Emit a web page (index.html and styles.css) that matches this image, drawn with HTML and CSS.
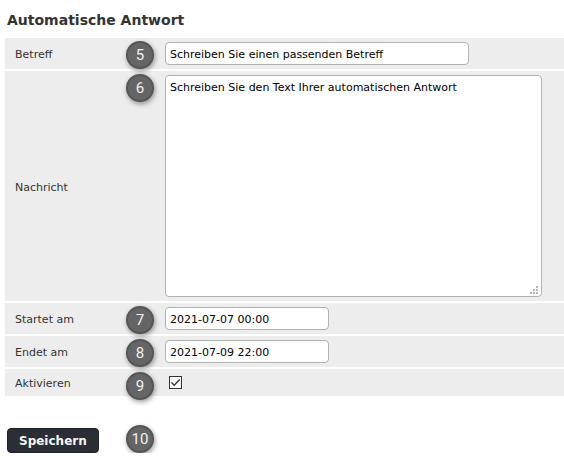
FILE: index.html
```html
<!DOCTYPE html>
<html lang="de">

<head>
    <meta charset="UTF-8" />
    <meta name="viewport" content="width=device-width, initial-scale=1.0" />
    <title>Automatische Antwort</title>
    <link rel="stylesheet" href="styles.css">
</head>

<body>

    <form>
        <h2>Automatische Antwort</h2>

        <div class="rows">
            <div class="row">
                <label for="subject">Betreff</label>
                <span class="step">5</span>
                <input type="text" id="subject" class="field wide" value="Schreiben Sie einen passenden Betreff" />
            </div>

            <div class="row">
                <label for="message">Nachricht</label>
                <span class="step">6</span>
                <div class="message">
                    <textarea id="message" class="field">Schreiben Sie den Text Ihrer automatischen Antwort</textarea>
                    <svg class="grip" width="8" height="8" viewBox="0 0 8 8" fill="#b5b5b5" shape-rendering="crispEdges" aria-hidden="true">
                        <path d="M6 0h2v2H6zM3 3h2v2H3zM6 3h2v2H6zM0 6h2v2H0zM3 6h2v2H3zM6 6h2v2H6z" />
                    </svg>
                </div>
            </div>

            <div class="row">
                <label for="start">Startet am</label>
                <span class="step">7</span>
                <input type="text" id="start" class="field date" value="2021-07-07 00:00" />
            </div>

            <div class="row">
                <label for="end">Endet am</label>
                <span class="step">8</span>
                <input type="text" id="end" class="field date" value="2021-07-09 22:00" />
            </div>

            <div class="row check-row">
                <label for="active">Aktivieren</label>
                <span class="step">9</span>
                <span class="check">
                    <input type="checkbox" id="active" checked />
                    <svg width="13" height="13" viewBox="0 0 13 13" fill="none" stroke="#333" stroke-width="1.4" aria-hidden="true">
                        <path d="M2.5 6.5l2.7 2.8 5.5-5.8" />
                    </svg>
                </span>
            </div>
        </div>

        <div class="actions">
            <button type="button">Speichern</button>
            <span class="step">10</span>
        </div>
    </form>

</body>

</html>
```

FILE: styles.css
```css
* {
    box-sizing: border-box;
}

body {
    margin: 0;
    background-color: white;
    color: #333;
    font-family: Verdana, "DejaVu Sans", sans-serif;
    font-size: 11px;
}

form {
    padding: 10px 0 0 5px;
}

h2 {
    margin: 0;
    padding: 0 2px 8px;
    font-size: 14px;
    line-height: 20px;
}

.rows {
    display: flex;
    flex-direction: column;
    gap: 2px;
}

.row {
    position: relative;
    display: grid;
    grid-template-columns: 150px 1fr;
    align-items: center;
    padding: 4px 22px 4px 10px;
    background-color: #ededed;
}

.row label {
    padding-top: 2px;
}

.field {
    display: block;
    width: 100%;
    height: 23px;
    margin: 0;
    padding: 2px 4px 0;
    border: 1px solid #b2b2b2;
    border-radius: 4px;
    background-color: white;
    color: black;
    font-family: inherit;
    font-size: 11px;
    line-height: 15px;
}

.wide {
    max-width: 304px;
}

.date {
    max-width: 164px;
}

.message {
    position: relative;
}

.message .field {
    height: 222px;
    padding: 4px;
    resize: none;
}

/* resize handle in the corner of the text box */
.grip {
    position: absolute;
    right: 4px;
    bottom: 3px;
}

.row:not(.check-row) {
    min-height: 31px;
}

.check-row {
    min-height: 27px;
}

.check {
    position: relative;
    width: 13px;
    height: 13px;
    margin-left: 4px;
}

.check input {
    display: block;
    appearance: none;
    width: 13px;
    height: 13px;
    margin: 0;
    border: 1px solid #333;
    background-color: white;
}

.check svg {
    position: absolute;
    top: 0;
    left: 0;
    pointer-events: none;
    visibility: hidden;
}

.check input:checked + svg {
    visibility: visible;
}

/* numbered markers */
.step {
    position: absolute;
    top: 3px;
    left: 121px;
    z-index: 1;
    width: 28px;
    height: 28px;
    border: 2px solid #555;
    border-radius: 50%;
    background-color: #656565;
    box-shadow: 1px 2px 5px rgba(0, 0, 0, 0.4);
    color: #f2f2f2;
    font-family: Roboto, sans-serif;
    font-size: 15px;
    line-height: 24px;
    text-align: center;
}

.actions {
    position: relative;
    padding: 32px 2px 0;
}

.actions .step {
    top: 29px;
}

button {
    display: block;
    height: 25px;
    padding: 0 11px;
    border: 1px solid #1f2328;
    border-radius: 4px;
    background-color: #2b2e34;
    color: #f5f5f5;
    font-family: inherit;
    font-size: 12px;
    font-weight: bold;
}
```
